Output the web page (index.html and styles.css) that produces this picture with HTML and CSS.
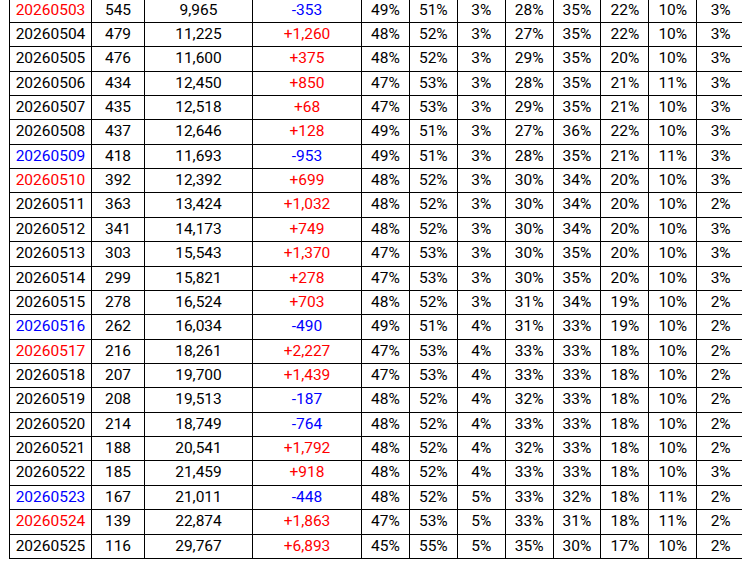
FILE: index.html
```html
<!DOCTYPE html>
<html>
<head>
<meta charset="utf-8">
<link rel="stylesheet" href="styles.css">
</head>
<body>
<div class="wrap">
<table class="grid">
<colgroup>
<col class="c-date"><col class="c-n"><col class="c-total"><col class="c-diff">
<col class="c-p"><col class="c-p"><col class="c-p"><col class="c-p"><col class="c-p"><col class="c-p"><col class="c-p"><col class="c-p">
</colgroup>
<tbody>
<tr><td class="red">20260503</td><td>545</td><td>9,965</td><td class="blue">-353</td><td>49%</td><td>51%</td><td>3%</td><td>28%</td><td>35%</td><td>22%</td><td>10%</td><td>3%</td></tr>
<tr><td>20260504</td><td>479</td><td>11,225</td><td class="red">+1,260</td><td>48%</td><td>52%</td><td>3%</td><td>27%</td><td>35%</td><td>22%</td><td>10%</td><td>3%</td></tr>
<tr><td>20260505</td><td>476</td><td>11,600</td><td class="red">+375</td><td>48%</td><td>52%</td><td>3%</td><td>29%</td><td>35%</td><td>20%</td><td>10%</td><td>3%</td></tr>
<tr><td>20260506</td><td>434</td><td>12,450</td><td class="red">+850</td><td>47%</td><td>53%</td><td>3%</td><td>28%</td><td>35%</td><td>21%</td><td>11%</td><td>3%</td></tr>
<tr><td>20260507</td><td>435</td><td>12,518</td><td class="red">+68</td><td>47%</td><td>53%</td><td>3%</td><td>29%</td><td>35%</td><td>21%</td><td>10%</td><td>3%</td></tr>
<tr><td>20260508</td><td>437</td><td>12,646</td><td class="red">+128</td><td>49%</td><td>51%</td><td>3%</td><td>27%</td><td>36%</td><td>22%</td><td>10%</td><td>3%</td></tr>
<tr><td class="blue">20260509</td><td>418</td><td>11,693</td><td class="blue">-953</td><td>49%</td><td>51%</td><td>3%</td><td>28%</td><td>35%</td><td>21%</td><td>11%</td><td>3%</td></tr>
<tr><td class="red">20260510</td><td>392</td><td>12,392</td><td class="red">+699</td><td>48%</td><td>52%</td><td>3%</td><td>30%</td><td>34%</td><td>20%</td><td>10%</td><td>3%</td></tr>
<tr><td>20260511</td><td>363</td><td>13,424</td><td class="red">+1,032</td><td>48%</td><td>52%</td><td>3%</td><td>30%</td><td>34%</td><td>20%</td><td>10%</td><td>2%</td></tr>
<tr><td>20260512</td><td>341</td><td>14,173</td><td class="red">+749</td><td>48%</td><td>52%</td><td>3%</td><td>30%</td><td>34%</td><td>20%</td><td>10%</td><td>3%</td></tr>
<tr><td>20260513</td><td>303</td><td>15,543</td><td class="red">+1,370</td><td>47%</td><td>53%</td><td>3%</td><td>30%</td><td>35%</td><td>20%</td><td>10%</td><td>3%</td></tr>
<tr><td>20260514</td><td>299</td><td>15,821</td><td class="red">+278</td><td>47%</td><td>53%</td><td>3%</td><td>30%</td><td>35%</td><td>20%</td><td>10%</td><td>3%</td></tr>
<tr><td>20260515</td><td>278</td><td>16,524</td><td class="red">+703</td><td>48%</td><td>52%</td><td>3%</td><td>31%</td><td>34%</td><td>19%</td><td>10%</td><td>2%</td></tr>
<tr><td class="blue">20260516</td><td>262</td><td>16,034</td><td class="blue">-490</td><td>49%</td><td>51%</td><td>4%</td><td>31%</td><td>33%</td><td>19%</td><td>10%</td><td>2%</td></tr>
<tr><td class="red">20260517</td><td>216</td><td>18,261</td><td class="red">+2,227</td><td>47%</td><td>53%</td><td>4%</td><td>33%</td><td>33%</td><td>18%</td><td>10%</td><td>2%</td></tr>
<tr><td>20260518</td><td>207</td><td>19,700</td><td class="red">+1,439</td><td>47%</td><td>53%</td><td>4%</td><td>33%</td><td>33%</td><td>18%</td><td>10%</td><td>2%</td></tr>
<tr><td>20260519</td><td>208</td><td>19,513</td><td class="blue">-187</td><td>48%</td><td>52%</td><td>4%</td><td>32%</td><td>33%</td><td>18%</td><td>10%</td><td>2%</td></tr>
<tr><td>20260520</td><td>214</td><td>18,749</td><td class="blue">-764</td><td>48%</td><td>52%</td><td>4%</td><td>33%</td><td>33%</td><td>18%</td><td>10%</td><td>2%</td></tr>
<tr><td>20260521</td><td>188</td><td>20,541</td><td class="red">+1,792</td><td>48%</td><td>52%</td><td>4%</td><td>32%</td><td>33%</td><td>18%</td><td>10%</td><td>2%</td></tr>
<tr><td>20260522</td><td>185</td><td>21,459</td><td class="red">+918</td><td>48%</td><td>52%</td><td>4%</td><td>33%</td><td>33%</td><td>18%</td><td>10%</td><td>3%</td></tr>
<tr><td class="blue">20260523</td><td>167</td><td>21,011</td><td class="blue">-448</td><td>48%</td><td>52%</td><td>5%</td><td>33%</td><td>32%</td><td>18%</td><td>11%</td><td>2%</td></tr>
<tr><td class="red">20260524</td><td>139</td><td>22,874</td><td class="red">+1,863</td><td>47%</td><td>53%</td><td>5%</td><td>33%</td><td>31%</td><td>18%</td><td>11%</td><td>2%</td></tr>
<tr><td>20260525</td><td>116</td><td>29,767</td><td class="red">+6,893</td><td>45%</td><td>55%</td><td>5%</td><td>35%</td><td>30%</td><td>17%</td><td>10%</td><td>2%</td></tr>
</tbody>
</table>
</div>
</body>
</html>
```
FILE: styles.css
```css
html, body {
  margin: 0;
  padding: 0;
  background: #ffffff;
  overflow: hidden;
}
.wrap {
  padding-left: 9px;
  margin-top: -2.4px;
}
.grid {
  border-collapse: collapse;
  table-layout: fixed;
  width: 735px;
  font-family: Roboto, "Liberation Sans", sans-serif;
  font-size: 15.5px;
  color: #000000;
}
.grid td {
  border: 1px solid #000000;
  text-align: center;
  padding: 2px 0;
  line-height: 19.36px;
  white-space: nowrap;
}
.c-date { width: 82px; }
.c-n { width: 53px; }
.c-total { width: 108px; }
.c-diff { width: 109px; }
.c-p { width: 47.9px; }
.red { color: #ff0000; }
.blue { color: #0000ff; }
```
